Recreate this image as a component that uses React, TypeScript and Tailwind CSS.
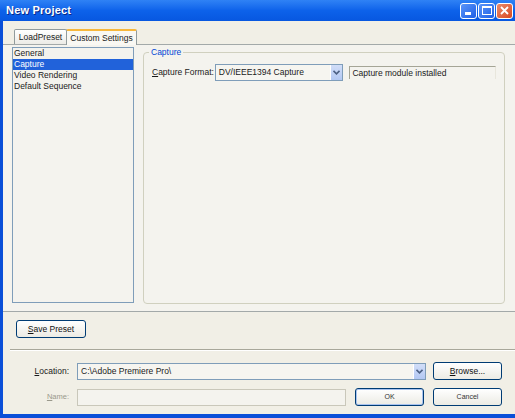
import React from "react";

const font = { fontFamily: '"Liberation Sans", Arial, sans-serif' };

function XpButton({ label, accel, wide = "w-[69px]", isDefault = false, small = false }: { label: string; accel?: string; wide?: string; isDefault?: boolean; small?: boolean }) {
  const rest = accel ? label.slice(1) : label;
  return (
    <button
      className={`${wide} h-[18px] rounded-[3px] border border-[#003c74] bg-gradient-to-b from-white to-[#ecebe4] ${
        small ? "text-[7px] text-[#333]" : "text-[8.5px] text-[#111]"
      } flex items-center justify-center ${isDefault ? "shadow-[inset_0_0_0_1px_#a9c3ef]" : ""}`}
    >
      {accel ? (
        <span>
          <span className="underline">{accel}</span>
          {rest}
        </span>
      ) : (
        label
      )}
    </button>
  );
}

function DropArrow() {
  return (
    <div className="w-[12px] h-full bg-gradient-to-b from-[#d2def8] to-[#b3c8f3] border-l border-white flex items-center justify-center">
      <svg width="7" height="5" viewBox="0 0 7 5">
        <path d="M0.5 0.8 L3.5 3.8 L6.5 0.8" fill="none" stroke="#4d6185" strokeWidth="1.6" />
      </svg>
    </div>
  );
}

export default function App() {
  const items = ["General", "Capture", "Video Rendering", "Default Sequence"];

  return (
    <div className="w-[515px] h-[418px] overflow-hidden flex flex-col bg-[#0a4fd8]" style={font}>
      {/* title bar */}
      <div className="h-[21px] flex items-center justify-between bg-gradient-to-b from-[#2f82f5] via-[#0d62ea] to-[#0757e0] pl-[6px] pr-[2px]">
        <span className="text-white font-bold text-[11px] tracking-[0.2px] [text-shadow:1px_1px_0_#0a2a8a]">New Project</span>
        <div className="flex gap-[1px] items-center">
          <div className="w-[17px] h-[16px] rounded-[3px] border border-white bg-gradient-to-br from-[#5b95f8] to-[#1d5ee6] relative">
            <div className="absolute left-[4px] bottom-[3px] w-[6px] h-[3px] bg-white" />
          </div>
          <div className="w-[17px] h-[16px] rounded-[3px] border border-white bg-gradient-to-br from-[#5b95f8] to-[#1d5ee6] flex items-center justify-center">
            <div className="w-[10px] h-[9px] border border-white border-t-[2px]" />
          </div>
          <div className="w-[17px] h-[16px] rounded-[3px] border border-white bg-gradient-to-br from-[#e88a6a] to-[#d9461c] flex items-center justify-center">
            <svg width="9" height="9" viewBox="0 0 9 9">
              <path d="M1 1 L8 8 M8 1 L1 8" stroke="white" strokeWidth="1.8" />
            </svg>
          </div>
        </div>
      </div>

      {/* body */}
      <div className="flex-1 ml-[3px] mb-[4px] bg-[#f1efe6] flex flex-col text-[8.5px] text-[#1a1a1a]">
        {/* tabs */}
        <div className="h-[23px] pl-[11px] flex items-end">
          <div className="w-[53px] h-[15px] border border-b-0 border-[#919b9c] rounded-t-[2px] bg-gradient-to-b from-white to-[#ecebe6] flex items-center justify-center">
            LoadPreset
          </div>
          <div className="w-[71px] h-[16px] -ml-[1px] border-x border-[#919b9c] border-t-[2px] border-t-[#f7b73c] rounded-t-[2px] bg-[#f9f8f3] flex items-center justify-center relative top-[1px]">
            Custom Settings
          </div>
        </div>

        {/* tab panel */}
        <div className="h-[268px] border-y border-[#a3a9a9] bg-[#f4f3ee] flex items-start pl-[9px] pt-[2px] gap-[9px]">
          <div className="w-[122px] h-[256px] border border-[#7f9db9] bg-[#f4f3ee] flex flex-col">
            {items.map((it) => (
              <div
                key={it}
                className={`h-[11px] leading-[11px] pl-[1px] ${it === "Capture" ? "bg-[#2162da] text-white" : ""}`}
              >
                {it}
              </div>
            ))}
          </div>

          <div className="w-[362px] h-[252px] mt-[5px] border border-[#d0d0bf] rounded-[4px] relative px-[8px] pt-[11px]">
            <span className="absolute -top-[6px] left-[5px] px-[2px] bg-[#f4f3ee] text-[#0046d5] leading-[10px]">Capture</span>
            <div className="flex items-center">
              <span className="w-[63px]">
                <span className="underline">C</span>apture Format:
              </span>
              <div className="w-[129px] h-[17px] border border-[#7f9db9] bg-[#f6f5f0] flex items-stretch">
                <span className="flex-1 pl-[3px] flex items-center">DV/IEEE1394 Capture</span>
                <DropArrow />
              </div>
              <div className="ml-[6px] w-[147px] h-[13px] border-t border-l border-[#a5a596] border-r border-r-[#e8e6dc] flex items-center pl-[2px]">
                Capture module installed
              </div>
            </div>
          </div>
        </div>

        {/* save preset */}
        <div className="pl-[13px] pt-[8px]">
          <XpButton label="Save Preset" accel="S" wide="w-[70px]" />
        </div>

        <div className="ml-[7px] mt-[11px] h-[2px] border-t border-[#a8a79a] border-b border-b-white" />

        {/* location */}
        <div className="mt-[11px] flex items-center h-[18px]">
          <span className="w-[67px] text-right pr-[1px]">
            <span className="underline">L</span>ocation:
          </span>
          <div className="ml-[7px] w-[349px] h-[17px] border border-[#7f9db9] bg-[#f6f5f0] flex items-stretch">
            <span className="flex-1 pl-[3px] flex items-center">C:\Adobe Premiere Pro\</span>
            <DropArrow />
          </div>
          <div className="ml-[7px]">
            <XpButton label="Browse..." accel="B" />
          </div>
        </div>

        {/* name */}
        <div className="mt-[8px] flex items-center h-[18px]">
          <span className="w-[67px] text-right pr-[1px] text-[#9a998c] text-[7.5px]">
            <span className="underline">N</span>ame:
          </span>
          <div className="ml-[7px] w-[269px] h-[17px] border border-[#c9c7ba] bg-[#f4f3ee]" />
          <div className="ml-[9px]">
            <XpButton label="OK" isDefault small />
          </div>
          <div className="ml-[9px]">
            <XpButton label="Cancel" small />
          </div>
        </div>
      </div>
    </div>
  );
}
